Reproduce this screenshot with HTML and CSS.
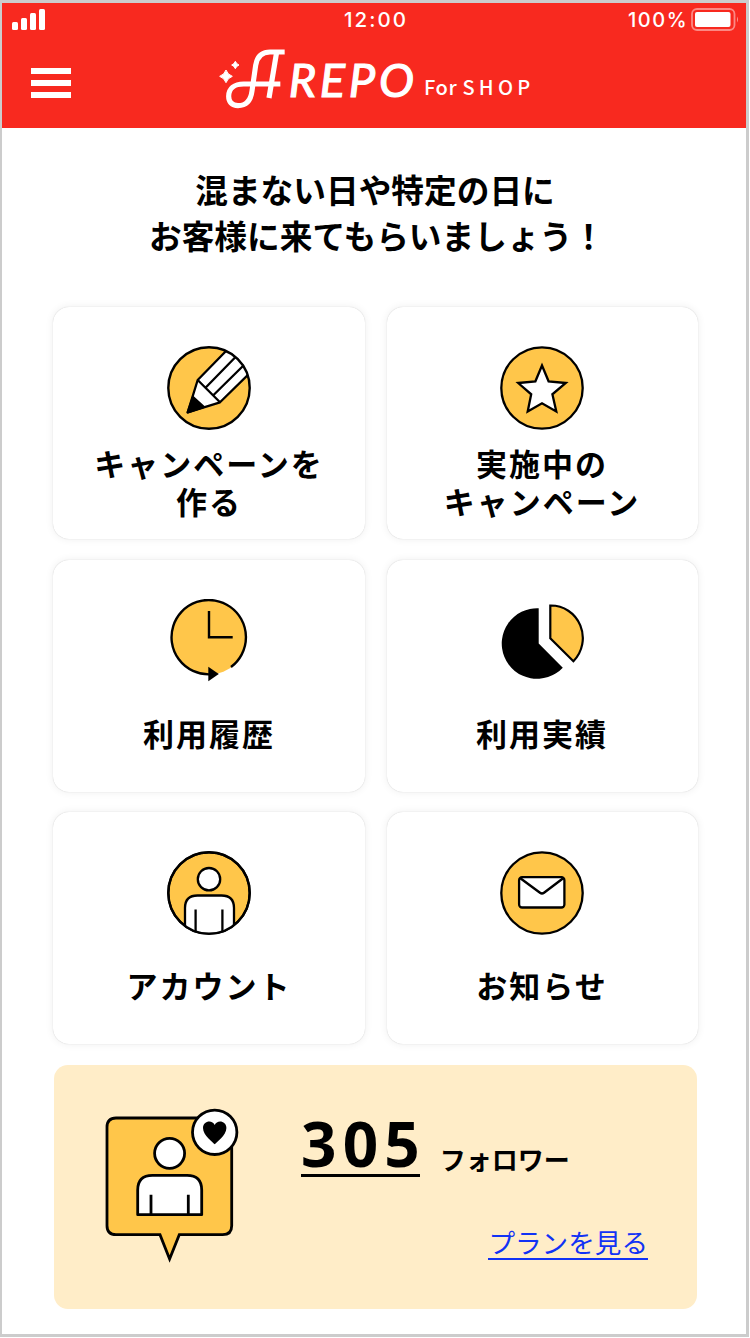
FILE: index.html
```html
<!DOCTYPE html>
<html lang="ja">
<head>
<meta charset="utf-8">
<title>AREPO For SHOP</title>
<link rel="stylesheet" href="styles.css">
</head>
<body>
<div class="screen">
  <header class="header">
    <div class="status">
      <svg class="signal" width="34" height="22" viewBox="0 0 34 22" fill="#fff"><rect x="0" y="13" width="6" height="8" rx="1.5"/><rect x="9" y="9" width="6" height="12" rx="1.5"/><rect x="18" y="4" width="6" height="17" rx="1.5"/><rect x="27" y="0" width="6" height="21" rx="1.5"/></svg>
      <span class="time">12:00</span>
      <div class="battery">
        <span>100%</span>
        <svg width="49" height="24" viewBox="0 0 49 24"><rect x="1" y="1" width="42.5" height="21" rx="5" fill="none" stroke="#fff" stroke-opacity=".45" stroke-width="1.8"/><rect x="4" y="4" width="35.5" height="15" rx="2" fill="#fff"/><path d="M46 8.5q2 3 0 6z" fill="#fff" fill-opacity=".5"/></svg>
      </div>
    </div>
    <div class="brandbar">
      <div class="menu"><i></i><i></i><i></i></div>
      <svg class="logo" width="210" height="75" viewBox="0 0 630 225" role="img" aria-label="AREPO">
        <g fill="none" stroke="#fff" stroke-width="15.5">
          <path d="M224 36H180C153 36 141 51 137 76L126 153C122 184 106 197 84 197C65 197 56 185 56 169C56 146 73 132 101 132H211"/>
          <path d="M200 36L177 174"/>
        </g>
        <g fill="#fff" stroke="#fff" stroke-width="3" stroke-linejoin="round"><path d="M48 90Q53 104 67 109Q53 114 48 128Q43 114 29 109Q43 104 48 90Z"/><path d="M76 64Q79 72 87 75Q79 78 76 86Q73 78 65 75Q73 72 76 64Z"/></g>
        <text class="logo-text" x="236" y="172" textLength="376" lengthAdjust="spacing">REPO</text>
      </svg>
      <span class="edition">For <b class="shop">SHOP</b></span>
    </div>
  </header>

  <main class="main">
    <h1 class="lead">混まない日や特定の日に<br><span class="lead-second">お客様に来てもらいましょう！</span></h1>

    <nav class="grid">
      <a class="card">
        <svg class="icon" viewBox="0 0 84 84">
          <defs><clipPath id="disc"><circle cx="42" cy="42" r="41.5"/></clipPath></defs>
          <circle cx="42" cy="42" r="40.7" fill="#ffc64a"/>
          <g clip-path="url(#disc)" stroke="#000" stroke-width="2.3" stroke-linejoin="round">
            <path d="M20.7 66.3L30.7 34L61 3L85 25L53 56.3Z" fill="#fff"/>
            <path d="M30.7 34L53 56.3M38.5 41.8L70 9.5M46.3 49.2L78 18" fill="none"/>
            <path d="M20.7 66.3L26 51L37 61Z"/>
          </g>
          <circle class="ring" cx="42" cy="42" r="40.7"/>
        </svg>
        <span class="label"><span>キャンペーンを</span><span>作る</span></span>
      </a>
      <a class="card">
        <svg class="icon" viewBox="0 0 84 84"><circle class="disc" cx="42" cy="42" r="40.7"/><path class="line" d="M42 19.5L48.6 35.3L65.8 37L52.4 48.3L56.3 65.5L42 57.3L27.7 65.5L31.2 48.3L18.2 37L35.4 35.3Z"/></svg>
        <span class="label"><span>実施中の</span><span>キャンペーン</span></span>
      </a>
      <a class="card">
        <svg class="icon" viewBox="0 0 84 84"><circle cx="42" cy="38.2" r="37.5" fill="#ffc64a"/><path class="ring" d="M64 68A37.2 37.2 0 1 0 42 75.4"/><path class="ring" d="M42 12V38.3H65.7"/><path d="M41.3 67.7L51.8 75L41.3 82.3Z"/></svg>
        <span class="label single">利用履歴</span>
      </a>
      <a class="card">
        <svg class="icon" viewBox="0 0 84 84"><path d="M38.7 9.3V44.5L62.8 68.7A35.3 35.3 0 1 1 38.7 9.3Z"/><path d="M50.3 6.5A32 32.6 0 0 1 73.4 62.2L50.3 39.3Z" fill="#ffc64a" stroke="#000" stroke-width="2.2"/></svg>
        <span class="label single">利用実績</span>
      </a>
      <a class="card">
        <svg class="icon" viewBox="0 0 84 84"><circle class="disc" cx="42" cy="42" r="40.7"/><circle class="line" cx="42" cy="28.2" r="11.2"/><g clip-path="url(#disc)"><path class="line" d="M18 90V57Q18 44.5 30.5 44.5H54.5Q67 44.5 67 57V90ZM28.6 58.5V84M55.4 58.5V84"/></g><circle class="ring" cx="42" cy="42" r="40.7"/></svg>
        <span class="label single">アカウント</span>
      </a>
      <a class="card">
        <svg class="icon" viewBox="0 0 84 84"><circle class="disc" cx="42" cy="42" r="40.7"/><rect class="line" x="19.1" y="26.2" width="45.3" height="30.3" rx="3"/><path class="ring" d="M20 27L40 41.7Q42 43.2 44 41.7L63.5 27"/></svg>
        <span class="label single">お知らせ</span>
      </a>
    </nav>

    <section class="followers">
      <svg class="bubble" width="136" height="156" viewBox="0 0 136 156">
        <g stroke="#000" stroke-width="2.8">
          <path d="M11 10H117.7Q126.7 10 126.7 19V117.7Q126.7 126.7 117.7 126.7H74.3L64.6 151L55 126.7H11Q2 126.7 2 117.7V19Q2 10 11 10Z" fill="#ffc64a"/>
          <circle cx="64.6" cy="45.3" r="15" fill="#fff"/>
          <path d="M32.7 106.7V82Q32.7 67.3 47.4 67.3H82Q96.7 67.3 96.7 82V106.7ZM46 86.7V106M83.3 86.7V106" fill="#fff" stroke-linejoin="round"/>
          <circle cx="109.7" cy="24.3" r="22.2" fill="#fff"/>
        </g>
        <path d="M109.7 36.3C108.2 34.5 98 27.5 98 20C98 12.5 107.5 11.3 109.7 17C111.9 11.3 121.4 12.5 121.4 20C121.4 27.5 111.2 34.5 109.7 36.3Z"/>
      </svg>
      <div class="summary">
        <p class="count"><span class="number">30<span class="last">5</span></span><span class="unit">フォロワー</span></p>
        <a class="plan">プランを見る</a>
      </div>
    </section>
  </main>
</div>
</body>
</html>
```

FILE: styles.css
```css
* { box-sizing: border-box; }
body { margin: 0; background: #fff; color: #000; font-family: "Noto Sans CJK JP", sans-serif; }

.screen { width: 749px; height: 1337px; border: 3px solid #ccc; border-left-width: 2px; background: #fff; }

.header { height: 125px; background: #f8291f; color: #fff; }
.status { display: grid; grid-template-columns: 1fr auto 1fr; height: 34px; padding: 0 6px 0 10px; align-items: center; }
.signal { margin-top: -1px; }
.time, .battery { font: 500 20px/24px Inter, sans-serif; letter-spacing: 1.5px; }
.time { font-size: 20.5px; letter-spacing: 2px; }
.battery { display: flex; justify-content: flex-end; gap: 3px; align-items: center; }

.brandbar { display: flex; height: 91px; padding-left: 29px; }
.menu { display: flex; flex-direction: column; gap: 6px; width: 40px; margin-top: 31px; }
.menu i { height: 6px; background: #fff; }
.logo { margin: 3px 0 0 139px; }
.logo-text { font: italic 400 141px Lato, sans-serif; fill: #fff; stroke: #fff; stroke-width: 3.5px; }
.edition { margin: 35px 0 0 4px; font-size: 20px; font-weight: 500; line-height: 30px; letter-spacing: .6px; white-space: pre; }
.shop { font-weight: 500; letter-spacing: 4.3px; }

.main { padding: 38px 49px 0 51px; }
.lead { margin: 0; text-align: center; font-size: 32.7px; font-weight: 700; line-height: 46px; }
.lead-second { padding-left: 4px; }

.grid { display: grid; grid-template-columns: 312px 311px; grid-auto-rows: 232px; column-gap: 21.5px; row-gap: 20.5px; margin-top: 49px; }
.card { display: flex; flex-direction: column; align-items: center; padding-top: 39px; border-radius: 16px; background: #fff; box-shadow: 0 0 1px rgba(0,0,0,.22), 0 0 9px rgba(0,0,0,.07); }
.icon { width: 84px; height: 84px; flex: none; }
.label { height: 76px; margin-top: 14px; text-align: center; font-size: 31px; font-weight: 700; line-height: 38px; letter-spacing: 2px; }
.label span { display: block; }
.single { margin-top: 12px; line-height: 76px; }
.disc { fill: #ffc64a; stroke: #000; stroke-width: 2.3px; }
.ring { fill: none; stroke: #000; stroke-width: 2.4px; }
.line { fill: #fff; stroke: #000; stroke-width: 2.3px; }

.followers { display: flex; width: 643px; height: 244px; margin: 20.5px 0 0 1px; padding: 43.5px 49px 0 51px; border-radius: 14px; background: #ffedc8; }
.summary { display: flex; flex: 1; flex-direction: column; margin-left: 60px; }
.count { display: flex; align-items: flex-start; margin: 0; }
.number { height: 69px; border-bottom: 3px solid #000; font: 700 62px/70px "Noto Sans", sans-serif; letter-spacing: 6.2px; }
.last { letter-spacing: 0; }
.unit { margin: 32px 0 0 20px; font-size: 26px; font-weight: 700; line-height: 38px; }
.plan { align-self: flex-end; margin-top: 44px; height: 38px; border-bottom: 2px solid #1132f5; color: #1132f5; font-size: 26.6px; line-height: 40px; }
```
